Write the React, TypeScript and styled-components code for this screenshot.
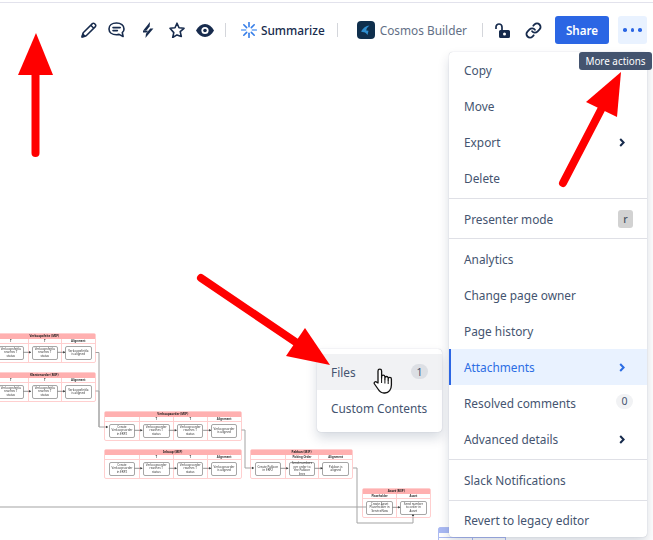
import React from "react";
import styled, { createGlobalStyle } from "styled-components";

const Global = createGlobalStyle`
  html, body { margin: 0; padding: 0; background: #fff; }
  body { font-family: "Noto Sans", "Open Sans", sans-serif; }
`;

const Page = styled.div`
  position: relative;
  width: 653px;
  height: 540px;
  overflow: hidden;
  background: #fff;
`;
const TopRule = styled.div`
  height: 1px;
  margin-top: 2px;
  background: #e2e2ec;
`;
const Toolbar = styled.header`
  display: flex;
  align-items: center;
  justify-content: flex-end;
  height: 28px;
  margin-top: 13px;
  padding-right: 6px;
`;
const Tool = styled.span<{ $after: number }>`
  display: inline-flex;
  align-items: center;
  margin-right: ${(p) => p.$after}px;
  color: #172b4d;
`;
const Sep = styled.span<{ $after: number }>`
  width: 1px;
  height: 14px;
  background: #d4d6db;
  margin-right: ${(p) => p.$after}px;
`;
const Summarize = styled.span`
  font-size: 11.85px;
  font-weight: 500;
  color: #172b4d;
  margin-left: 4px;
  margin-right: 12px;
`;
const Space = styled.span`
  font-size: 11.85px;
  color: #626f86;
  margin-left: 5px;
  margin-right: 15px;
`;
const ShareButton = styled.button`
  width: 54px;
  height: 28px;
  margin-left: 13px;
  margin-right: 9px;
  padding: 0;
  border: 0;
  border-radius: 3px;
  background: #2b66e4;
  color: #fff;
  font: 600 11.6px "Noto Sans", sans-serif;
`;
const MoreButton = styled.button`
  display: flex;
  align-items: center;
  justify-content: center;
  gap: 4px;
  width: 29px;
  height: 28px;
  padding: 0;
  border: 0;
  border-radius: 3px;
  background: #e9f2ff;
`;
const Dot = styled.i`
  width: 3.5px;
  height: 3.5px;
  border-radius: 50%;
  background: #2b66e4;
`;
const Tooltip = styled.div`
  position: absolute;
  left: 579px;
  top: 52px;
  z-index: 5;
  width: 73px;
  height: 18px;
  border-radius: 3px;
  background: #44546f;
  color: #fff;
  font-size: 9.9px;
  line-height: 18px;
  text-align: center;
`;
const Menu = styled.nav`
  position: absolute;
  left: 449px;
  top: 52px;
  z-index: 3;
  width: 198px;
  height: 485px;
  display: flex;
  flex-direction: column;
  background: #fff;
  border-radius: 4px;
  box-shadow: 0 6px 12px rgba(9, 30, 66, 0.16), 0 0 1px rgba(9, 30, 66, 0.3);
`;
const MenuItem = styled.div<{ $active?: boolean; $h?: number; $nudge?: boolean }>`
  display: flex;
  align-items: center;
  justify-content: space-between;
  box-sizing: border-box;
  height: ${(p) => p.$h ?? 36}px;
  flex: none;
  padding: ${(p) => (p.$nudge ? 1 : 0)}px 14px 0 ${(p) => (p.$active ? 13 : 15)}px;
  font-size: 11.85px;
  white-space: nowrap;
  color: ${(p) => (p.$active ? "#2b6de4" : "#44546f")};
  background: ${(p) => (p.$active ? "#e9f2ff" : "transparent")};
  border-left: ${(p) => (p.$active ? "2px solid #2b66e4" : "0")};
`;
const Divider = styled.div<{ $top?: number; $bottom?: number }>`
  flex: none;
  height: 1px;
  background: #dfe0e6;
  margin-top: ${(p) => p.$top ?? 0}px;
  margin-bottom: ${(p) => p.$bottom ?? 0}px;
`;
const KeyCap = styled.span`
  display: flex;
  align-items: center;
  justify-content: center;
  width: 15px;
  height: 18px;
  margin-top: -1px;
  border-radius: 3px;
  background: #d2d2d2;
  color: #44505e;
  font-size: 10.5px;
  font-weight: 500;
`;
const Count = styled.span`
  display: flex;
  align-items: center;
  justify-content: center;
  width: 17px;
  height: 15px;
  margin-top: -4px;
  border-radius: 8px;
  background: #f1f2f4;
  color: #44546f;
  font-size: 10.5px;
`;
const Chevron = styled.svg`
  width: 6px;
  height: 9px;
  margin-right: 8px;
`;
const SubMenu = styled.div`
  position: absolute;
  left: 317px;
  top: 349px;
  z-index: 2;
  box-sizing: border-box;
  width: 125px;
  height: 83px;
  padding-top: 5px;
  background: #fff;
  border-radius: 4px;
  box-shadow: 0 6px 12px rgba(9, 30, 66, 0.16), 0 0 1px rgba(9, 30, 66, 0.3);
`;
const SubItem = styled.div<{ $hover?: boolean }>`
  display: flex;
  align-items: center;
  justify-content: space-between;
  height: 36px;
  padding: 0 14px;
  font-size: 11.85px;
  white-space: nowrap;
  color: #44546f;
  background: ${(p) => (p.$hover ? "#f1f2f4" : "transparent")};
`;
const FileCount = styled.span`
  display: flex;
  align-items: center;
  justify-content: center;
  width: 17px;
  height: 15px;
  margin-top: -1px;
  border-radius: 8px;
  background: #dcdfe4;
  font-size: 10.5px;
`;
const Cursor = styled.svg`
  position: absolute;
  left: 373px;
  top: 368px;
  z-index: 4;
  width: 20px;
  height: 26px;
`;
const Canvas = styled.div`
  position: absolute;
  inset: 0;
  z-index: 0;
  overflow: hidden;
  filter: blur(0.35px);
  pointer-events: none;
`;
const Wires = styled.svg`
  position: absolute;
  inset: 0;
  width: 653px;
  height: 540px;
`;
const FlowCard = styled.section<{ $x: number; $y: number; $w: number; $blue?: boolean }>`
  position: absolute;
  left: ${(p) => p.$x}px;
  top: ${(p) => p.$y}px;
  width: ${(p) => p.$w}px;
  height: 30px;
  box-sizing: border-box;
  display: flex;
  flex-direction: column;
  border: 1px solid ${(p) => (p.$blue ? "#aebcf2" : "#ffcfcf")};
  border-radius: 2px;
  background: #fff;
`;
const FlowTitle = styled.div<{ $blue?: boolean }>`
  height: 4.6px;
  flex: none;
  background: ${(p) => (p.$blue ? "#a9b9f4" : "#ffb0b0")};
  color: #222;
  font-size: 3px;
  font-weight: 700;
  line-height: 4.6px;
  text-align: center;
`;
const Lanes = styled.div<{ $n: number }>`
  flex: 1;
  display: grid;
  grid-template-columns: repeat(${(p) => p.$n}, 1fr);
`;
const Lane = styled.div<{ $blue?: boolean }>`
  display: flex;
  flex-direction: column;
  align-items: center;
  border-left: 1px solid ${(p) => (p.$blue ? "#aebcf2" : "#ffcfcf")};
  &:first-child { border-left: 0; }
`;
const LaneHead = styled.div<{ $blue?: boolean }>`
  align-self: stretch;
  height: 4px;
  border-bottom: 0.6px solid ${(p) => (p.$blue ? "#aebcf2" : "#ffcfcf")};
  color: #333;
  font-size: 2.8px;
  font-weight: 700;
  line-height: 4px;
  text-align: center;
`;
const FlowNode = styled.div`
  box-sizing: border-box;
  width: 26.5px;
  height: 13.5px;
  margin-top: 2.7px;
  padding: 0 1.5px;
  display: flex;
  align-items: center;
  justify-content: center;
  border: 1px solid #a6a6a6;
  border-radius: 2px;
  background: #fff;
  color: #333;
  font-size: 3px;
  line-height: 3.5px;
  text-align: center;
`;
const Overlay = styled.svg`
  position: absolute;
  inset: 0;
  z-index: 6;
  width: 653px;
  height: 540px;
  pointer-events: none;
`;

type Card = { x: number; y: number; w: number; title: string; heads: string[]; nodes: string[]; blue?: boolean };

const feit = ["Verkoopsfeitla reaches T status", "Verkoopsfeitla reaches T status", "Verkoopsfeitla is aligned"];
const order = ["Create Verkoopsorder in ERP2", "Verkoopsorder reaches T status", "Verkoopsorder reaches T status", "Verkoopsorder is aligned"];

const cards: Card[] = [
  { x: -7, y: 333, w: 102.5, title: "Verkoopsfeite (MIP)", heads: ["T", "T", "Alignment"], nodes: feit },
  { x: -7, y: 372, w: 102.5, title: "Klantenorder (MIP)", heads: ["T", "T", "Alignment"], nodes: feit },
  { x: 104, y: 411, w: 137.5, title: "Verkoopsorder (MIP)", heads: ["", "T", "T", "Alignment"], nodes: order },
  { x: 104, y: 449, w: 137.5, title: "Inkoop (MIP)", heads: ["", "T", "T", "Alignment"], nodes: order },
  { x: 250, y: 449, w: 103, title: "Pakbon (MIP)", heads: ["", "Picking Order", "Alignment"], nodes: ["Create Pakbon in ERP2", "Send numbers per order to the Pakbon lines", "Pakbon is aligned"] },
  { x: 362, y: 488, w: 68.5, title: "Asset (MIP)", heads: ["Placeholder", "Asset"], nodes: ["Create Asset Placeholder in ServiceNow", "Send number to order in Asset"] },
  { x: 438, y: 527, w: 68, title: "Asset", heads: ["", ""], nodes: ["", ""], blue: true },
];

const elbows = [
  "M95.5 352.5H99V427H108",
  "M95.5 391H99V427",
  "M241.5 430H245V468H254",
  "M353 468H357V523H413V514",
  "M0 507H366",
];

const NextChevron = ({ color = "#172b4d" }: { color?: string }) => (
  <Chevron viewBox="0 0 6 9">
    <path d="M1.2 1L4.600 4.500L1.200 8" fill="none" stroke={color} strokeWidth="2" />
  </Chevron>
);

const rays = [
  [12, 1, 12, 7, "#357de8"],
  [19.8, 4.2, 15.5, 8.5, "#357de8"],
  [23, 12, 17, 12, "#65a3f5"],
  [19.8, 19.8, 15.5, 15.5, "#357de8"],
  [12, 23, 12, 17, "#357de8"],
  [4.2, 19.8, 8.5, 15.5, "#357de8"],
  [1, 12, 7, 12, "#65a3f5"],
  [4.2, 4.2, 8.5, 8.5, "#357de8"],
] as const;

export default function App() {
  const segs = cards.flatMap((c) => {
    const col = c.w / c.nodes.length;
    return c.nodes.slice(0, -1).map((_, i) => ({
      x1: c.x + col * (i + 0.5) + 13.2,
      x2: c.x + col * (i + 1.5) - 13.2,
      y: c.y + 19.3,
    }));
  });

  return (
    <Page>
      <Global />
      <Canvas>
        {cards.map((c) => (
          <FlowCard key={c.title + c.y} $x={c.x} $y={c.y} $w={c.w} $blue={c.blue}>
            <FlowTitle $blue={c.blue}>{c.title}</FlowTitle>
            <Lanes $n={c.nodes.length}>
              {c.nodes.map((n, i) => (
                <Lane key={i} $blue={c.blue}>
                  <LaneHead $blue={c.blue}>{c.heads[i]}</LaneHead>
                  <FlowNode>{n}</FlowNode>
                </Lane>
              ))}
            </Lanes>
          </FlowCard>
        ))}
        <Wires viewBox="0 0 653 540">
          {elbows.map((d) => (
            <path key={d} d={d} fill="none" stroke="#a3a3a3" strokeWidth="1" />
          ))}
          {segs.map((s, i) => (
            <g key={i}>
              <path d={`M${s.x1} ${s.y}H${s.x2}`} stroke="#777" strokeWidth="0.8" />
              <path d={`M${s.x2 - 2} ${s.y - 1.2}L${s.x2} ${s.y}L${s.x2 - 2} ${s.y + 1.2}z`} fill="#333" />
            </g>
          ))}
          <path d="M106 425.8L108 427L106 428.2z M252 466.8L254 468L252 469.2z M411.8 516L413 514L414.2 516z" fill="#333" />
        </Wires>
      </Canvas>

      <TopRule />
      <Toolbar>
        <Tool $after={11}>
          <svg width="16" height="16" viewBox="0 0 16 16" fill="none" stroke="currentColor" strokeWidth="1.5" strokeLinejoin="round">
            <path d="M1.2 14.8l1-4L11.4 1.600a1.400 1.400 0 0 1 2 0l1 1a1.400 1.400 0 0 1 0 2L5.200 13.800z" />
            <path d="M9.800 3.200l3 3" />
            <path d="M1 15l.8-3 2.200 2.200z" fill="currentColor" />
          </svg>
        </Tool>
        <Tool $after={17}>
          <svg width="17" height="16" viewBox="0 0 17 16" fill="none" stroke="currentColor" strokeWidth="1.6" strokeLinecap="round" strokeLinejoin="round">
            <path d="M8.500 1C12.900 1 16 3.400 16 6.900c0 1.600-.7 2.900-1.700 3.800l.8 3.800-4-2.100c-.8.2-1.700.3-2.600.3C4.100 12.700 1 10.400 1 6.900S4.100 1 8.500 1z" />
            <path d="M5 5.600h7.200M5 8.600h4.400" />
          </svg>
        </Tool>
        <Tool $after={15}>
          <svg width="12" height="16" viewBox="0 0 12 16" fill="currentColor">
            <path d="M8 0L1 8.800h3.200L7.600 4.600z" />
            <path d="M11.400 6.600H8.200L4 11.800 3.400 16l8-9.400z" />
            <path d="M1 8.800h5.200l-1.400 1.600H1z" />
          </svg>
        </Tool>
        <Tool $after={11}>
          <svg width="16" height="16" viewBox="0 0 16 16" fill="none" stroke="currentColor" strokeWidth="1.6" strokeLinejoin="round">
            <path d="M8 1.200l2 4.600 5 .5-3.800 3.300 1.100 4.900L8 12.900l-4.300 2.600 1.100-4.900L1 6.300l5-.5z" />
          </svg>
        </Tool>
        <Tool $after={11}>
          <svg width="18" height="13" viewBox="0 0 18 13">
            <path d="M0 6.500C2.200 2.400 5.300 0 9 0s6.800 2.400 9 6.500C15.800 10.600 12.700 13 9 13S2.200 10.600 0 6.500z" fill="currentColor" />
            <circle cx="9" cy="6.500" r="3.600" fill="#fff" />
            <circle cx="9" cy="6.500" r="1.800" fill="currentColor" />
          </svg>
        </Tool>
        <Sep $after={15} />
        <Tool $after={0}>
          <svg width="16" height="16" viewBox="0 0 24 24" strokeWidth="2.400" strokeLinecap="round">
            {rays.map(([a, b, c, d, col], i) => (
              <line key={i} x1={a} y1={b} x2={c} y2={d} stroke={col} />
            ))}
          </svg>
        </Tool>
        <Summarize>Summarize</Summarize>
        <Sep $after={19} />
        <Tool $after={0}>
          <svg width="18" height="18" viewBox="0 0 18 18">
            <rect width="18" height="18" rx="4" fill="#0f2f4d" />
            <path d="M4 10.500C6 7 9 4.800 12.500 4.500 10.500 6 9.500 7.500 9.200 9.500L11.500 9.800 10.500 14C9.500 12.500 8.500 11.500 7 11.200 6 11 5 10.800 4 10.500z" fill="#2f8fd0" />
          </svg>
        </Tool>
        <Space>Cosmos Builder</Space>
        <Sep $after={12} />
        <Tool $after={15}>
          <svg width="15" height="15" viewBox="0 0 15 15" fill="none">
            <path d="M1 6V4a3 3 0 0 1 6 0v4" stroke="currentColor" strokeWidth="1.700" />
            <path fillRule="evenodd" d="M5.500 7h8a1.500 1.500 0 0 1 1.500 1.500v5a1.500 1.500 0 0 1-1.500 1.500h-8A1.500 1.500 0 0 1 4 13.500v-5A1.500 1.500 0 0 1 5.500 7zm4 2.500a1.500 1.500 0 1 0 0 3 1.500 1.500 0 0 0 0-3z" fill="currentColor" />
          </svg>
        </Tool>
        <Tool $after={0}>
          <svg width="17" height="17" viewBox="0 0 24 24" fill="none" stroke="currentColor" strokeWidth="2.600" strokeLinecap="round" strokeLinejoin="round">
            <path d="M10 13a5 5 0 0 0 7.540.540l3-3a5 5 0 0 0-7.070-7.070l-1.720 1.710" />
            <path d="M14 11a5 5 0 0 0-7.540-.540l-3 3a5 5 0 0 0 7.070 7.070l1.710-1.710" />
          </svg>
        </Tool>
        <ShareButton>Share</ShareButton>
        <MoreButton aria-label="More actions">
          <Dot />
          <Dot />
          <Dot />
        </MoreButton>
      </Toolbar>

      <Tooltip>More actions</Tooltip>

      <Menu>
        <MenuItem>Copy</MenuItem>
        <MenuItem>Move</MenuItem>
        <MenuItem>
          Export
          <NextChevron />
        </MenuItem>
        <MenuItem>Delete</MenuItem>
        <Divider $top={2} />
        <MenuItem $h={39} $nudge>
          Presenter mode
          <KeyCap>r</KeyCap>
        </MenuItem>
        <Divider $bottom={2} />
        <MenuItem>Analytics</MenuItem>
        <MenuItem>Change page owner</MenuItem>
        <MenuItem>Page history</MenuItem>
        <MenuItem $active>
          Attachments
          <NextChevron color="#2b6de4" />
        </MenuItem>
        <MenuItem>
          Resolved comments
          <Count>0</Count>
        </MenuItem>
        <MenuItem>
          Advanced details
          <NextChevron />
        </MenuItem>
        <Divider $top={2} />
        <MenuItem $h={40}>Slack Notifications</MenuItem>
        <Divider />
        <MenuItem $nudge>Revert to legacy editor</MenuItem>
      </Menu>

      <SubMenu>
        <SubItem $hover>
          Files
          <FileCount>1</FileCount>
        </SubItem>
        <SubItem>Custom Contents</SubItem>
      </SubMenu>

      <Cursor viewBox="0 0 20 26">
        <path
          d="M5 15V3a1.800 1.800 0 0 1 3.600 0v7V8.500a1.700 1.700 0 0 1 3.300 0V11V9.800a1.700 1.700 0 0 1 3.300 0V12V11a1.600 1.600 0 0 1 3.200 0v6c0 4.500-2.500 8-6.500 8H11c-3 0-4.500-1.500-6-4L1.500 16c-1-1.800 1-3.200 2.300-1.800z"
          fill="#fff"
          stroke="#111"
          strokeWidth="1.300"
          strokeLinejoin="round"
        />
        <path d="M8.600 10v5M11.900 11v4.500M15.200 12v4" stroke="#111" strokeWidth="1" fill="none" />
      </Cursor>

      <Overlay viewBox="0 0 653 540">
        <path d="M35.500 153V70" stroke="#f00" strokeWidth="8" strokeLinecap="round" />
        <polygon points="36,33 53,75 18,75" fill="#f00" />
        <path d="M201 278L300 345" stroke="#f00" strokeWidth="8" strokeLinecap="round" />
        <polygon points="330,365 286,356 305,328" fill="#f00" />
        <path d="M563 183L604 104" stroke="#f00" strokeWidth="8" strokeLinecap="round" />
        <polygon points="621,72 617,117 586,102" fill="#f00" />
      </Overlay>
    </Page>
  );
}
